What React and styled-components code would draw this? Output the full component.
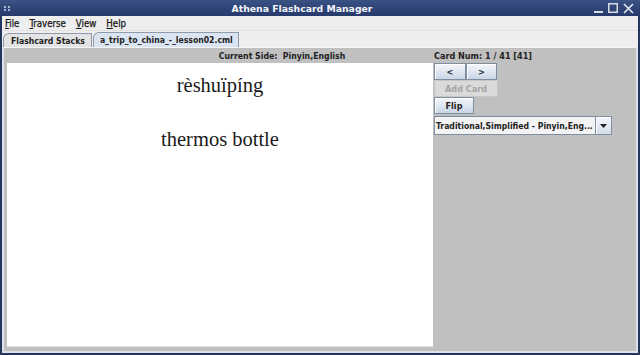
import React from 'react';
import styled, { createGlobalStyle } from 'styled-components';

const Global = createGlobalStyle`
  html, body { margin: 0; padding: 0; width: 640px; height: 355px; overflow: hidden; background: #22335a; }
  #root { width: 640px; height: 355px; }
  * { box-sizing: border-box; }
`;

const uiFont = `"DejaVu Sans Condensed", "DejaVu Sans", sans-serif`;

const Frame = styled.div`
  width: 640px;
  height: 355px;
  display: flex;
  flex-direction: column;
  background: #24365e;
  font-family: ${uiFont};
`;

const TitleBar = styled.div`
  height: 16px;
  flex: none;
  display: grid;
  grid-template-columns: 1fr auto 1fr;
  align-items: center;
  padding: 0 6px 0 4px;
  background: linear-gradient(#3a5284, #26396a);
  color: #ffffff;
`;

const Grip = styled.div`
  display: grid;
  grid-template-columns: repeat(2, 2px);
  gap: 1px 2px;
  width: 6px;
`;

const Dot = styled.span`
  width: 2px;
  height: 2px;
  background: #aab6cf;
`;

const Title = styled.div`
  font-family: "DejaVu Sans", sans-serif;
  font-weight: bold;
  font-size: 9.3px;
  color: #f4f6fa;
  margin-right: 34px;
`;

const WinControls = styled.div`
  justify-self: end;
  display: flex;
  align-items: center;
  gap: 5px;
`;

const Body = styled.div`
  flex: 1;
  display: flex;
  flex-direction: column;
  margin: 0 2px 2px 2px;
  background: #eeeeee;
  min-height: 0;
`;

const MenuBar = styled.div`
  height: 15px;
  flex: none;
  display: flex;
  align-items: center;
  gap: 10px;
  padding-left: 3px;
  background: #eeeeee;
  border-bottom: 1px solid #e2e2e2;
`;

const MenuItem = styled.span`
  font-size: 9.6px;
  font-weight: normal;
  color: #1a1a1a;
  -webkit-text-stroke: 0.25px #1a1a1a;
  & u { text-decoration: underline; text-underline-offset: 1px; }
`;

const TabRow = styled.div`
  height: 16px;
  flex: none;
  display: flex;
  align-items: flex-end;
  padding-left: 1px;
`;

const Tab = styled.div`
  height: ${p => (p.$active ? 15 : 14)}px;
  display: flex;
  align-items: center;
  padding: 0 ${p => (p.$active ? 5 : 6)}px 0 ${p => (p.$first ? 7 : 6)}px;
  font-weight: bold;
  font-size: 8.6px;
  color: #222;
  border: 1px solid #8f9bab;
  border-bottom: none;
  border-top-left-radius: 6px;
  background: ${p => (p.$active ? '#dbe5f1' : '#e4e4e4')};
  margin-left: ${p => (p.$first ? 0 : 1)}px;
`;

const Pane = styled.div`
  flex: 1;
  min-height: 0;
  display: grid;
  grid-template-columns: 426px 1fr;
  background: #c0c0c0;
  border: 2px solid #dde1e8;
  border-top: 1px solid #f4f6f9;
  padding: 1px 2px 4px 3px;
`;

const LeftCol = styled.div`
  display: flex;
  flex-direction: column;
  min-height: 0;
`;

const Caption = styled.div`
  height: 14px;
  line-height: 14px;
  text-align: center;
  padding-left: 124px;
  font-weight: bold;
  font-size: 8.7px;
  color: #222;
  white-space: pre;
`;

const Card = styled.div`
  flex: 1;
  background: #ffffff;
  border-bottom: 1px solid #e6e6e6;
  padding-top: 9px;
  display: flex;
  flex-direction: column;
  align-items: center;
  font-family: "Liberation Serif", "DejaVu Serif", serif;
  font-size: 20.5px;
  color: #1a1a1a;
`;

const CardLine = styled.div`
  height: 27px;
  line-height: 27px;
`;

const RightCol = styled.div`
  display: flex;
  flex-direction: column;
  align-items: flex-start;
  padding-left: 1px;
`;

const Info = styled.div`
  height: 14px;
  line-height: 14px;
  font-weight: bold;
  font-size: 9px;
  color: #222;
`;

const ButtonRow = styled.div`
  display: flex;
`;

const Button = styled.div`
  width: ${p => p.$w}px;
  height: 17px;
  display: flex;
  align-items: center;
  justify-content: center;
  font-weight: bold;
  font-size: 9px;
  color: ${p => (p.$disabled ? '#a4a4a4' : '#222')};
  border: 1px solid ${p => (p.$disabled ? '#c6c6c6' : '#7f8fa0')};
  background: ${p => (p.$disabled
    ? '#dadada'
    : 'linear-gradient(#f4f7fb, #dfe7f1 50%, #c9d6e6)')};
  box-shadow: ${p => (p.$disabled ? 'none' : 'inset 1px 1px 0 #ffffff')};
  margin-bottom: ${p => p.$mb || 0}px;
`;

const Combo = styled.div`
  width: 178px;
  height: 19px;
  display: flex;
  border: 1px solid #7f8fa0;
  background: #f3f3f3;
`;

const ComboText = styled.div`
  flex: 1;
  min-width: 0;
  display: flex;
  align-items: center;
  padding-left: 1px;
  font-weight: bold;
  font-size: 8.6px;
  color: #222;
  white-space: pre;
  overflow: hidden;
`;

const ComboArrow = styled.div`
  width: 16px;
  flex: none;
  display: flex;
  align-items: center;
  justify-content: center;
  border-left: 1px solid #7f8fa0;
  background: linear-gradient(#f4f7fb, #d3deeb);
  box-shadow: inset 1px 1px 0 #ffffff;
`;

export default function App() {
  return (
    <>
      <Global />
      <Frame>
        <TitleBar>
          <Grip>
            <Dot /><Dot /><Dot /><Dot />
          </Grip>
          <Title>Athena Flashcard Manager</Title>
          <WinControls>
            <svg width="9" height="10" viewBox="0 0 9 10">
              <rect x="0" y="8" width="9" height="2" fill="#d8dde8" />
            </svg>
            <svg width="10" height="10" viewBox="0 0 10 10">
              <rect x="0.75" y="0.75" width="8.5" height="8.5" fill="none" stroke="#d8dde8" strokeWidth="1.5" />
            </svg>
            <svg width="11" height="11" viewBox="0 0 11 11">
              <path d="M1 1 L10 10 M10 1 L1 10" stroke="#e4e8f0" strokeWidth="1.6" />
            </svg>
          </WinControls>
        </TitleBar>
        <Body>
          <MenuBar>
            <MenuItem><u>F</u>ile</MenuItem>
            <MenuItem><u>T</u>raverse</MenuItem>
            <MenuItem><u>V</u>iew</MenuItem>
            <MenuItem><u>H</u>elp</MenuItem>
          </MenuBar>
          <TabRow>
            <Tab $first>Flashcard Stacks</Tab>
            <Tab $active>a_trip_to_china_-_lesson02.cml</Tab>
          </TabRow>
          <Pane>
            <LeftCol>
              <Caption>{'Current Side:  Pinyin,English'}</Caption>
              <Card>
                <CardLine>rèshuïpíng</CardLine>
                <CardLine />
                <CardLine>thermos bottle</CardLine>
              </Card>
            </LeftCol>
            <RightCol>
              <Info>Card Num: 1 / 41 [41]</Info>
              <ButtonRow>
                <Button $w={32}>&lt;</Button>
                <Button $w={31}>&gt;</Button>
              </ButtonRow>
              <Button $w={64} $disabled>Add Card</Button>
              <Button $w={40} $mb={2}>Flip</Button>
              <Combo>
                <ComboText>{'Traditional,Simplified - Pinyin,Eng...'}</ComboText>
                <ComboArrow>
                  <svg width="7" height="4" viewBox="0 0 7 4">
                    <path d="M0 0 H7 L3.5 4 Z" fill="#222" />
                  </svg>
                </ComboArrow>
              </Combo>
            </RightCol>
          </Pane>
        </Body>
      </Frame>
    </>
  );
}
